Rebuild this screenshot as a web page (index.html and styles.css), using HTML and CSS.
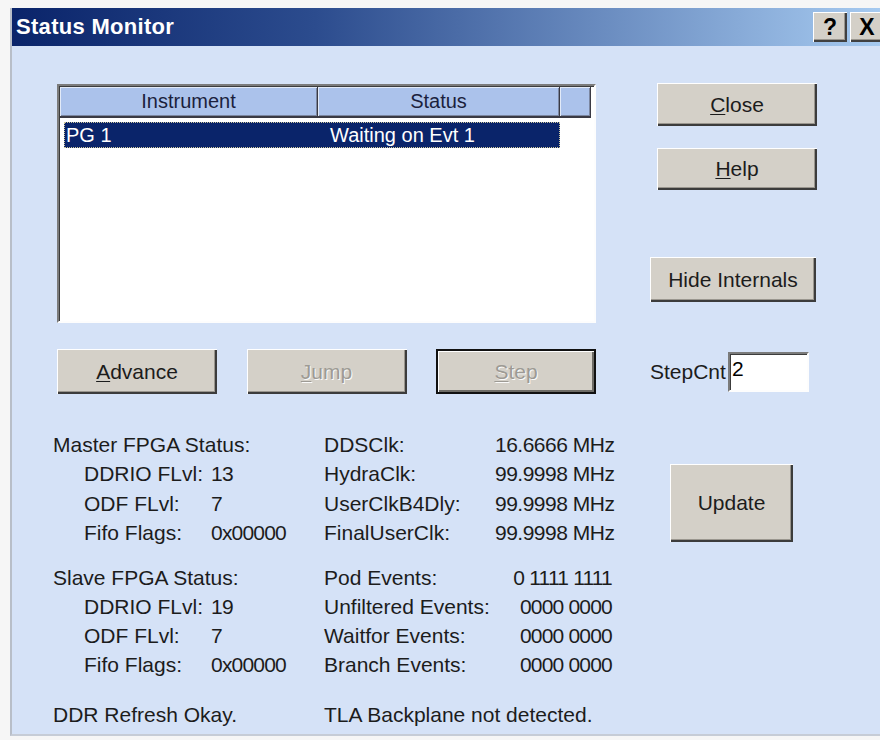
FILE: index.html
```html
<!DOCTYPE html>
<html lang="en">
<head>
<meta charset="utf-8">
<title>Status Monitor</title>
<link rel="stylesheet" href="styles.css">
</head>
<body>
<div class="window">
  <div class="titlebar">
    <span class="title">Status Monitor</span>
    <div class="caption-btns">
      <button class="cap-btn">?</button>
      <button class="cap-btn">X</button>
    </div>
  </div>

  <div class="client">
    <div class="top">
      <div class="listbox">
        <div class="lv-head">
          <div class="hcell h1">Instrument</div>
          <div class="hcell h2">Status</div>
          <div class="hcell h3"></div>
        </div>
        <div class="lv-row selected">
          <span class="r1">PG 1</span><span class="r2">Waiting on Evt 1</span>
        </div>
      </div>

      <div class="side">
        <button class="btn btn-close"><u>C</u>lose</button>
        <button class="btn btn-help"><u>H</u>elp</button>
        <button class="btn btn-hide">Hide Internals</button>
      </div>

      <div class="actions">
        <button class="btn act"><u>A</u>dvance</button>
        <button class="btn act" disabled><u>J</u>ump</button>
        <button class="btn act default" disabled><u>S</u>tep</button>
      </div>

      <div class="stepcnt">
        <label for="stepcnt">StepCnt</label>
        <input id="stepcnt" class="edit" value="2">
      </div>
    </div>

    <div class="info">
      <div class="group">Master FPGA Status:</div>
      <div class="mlabel">DDSClk:</div>
      <div class="mval">16.6666 MHz</div>

      <div class="sub">DDRIO FLvl:</div>
      <div class="val">13</div>
      <div class="mlabel">HydraClk:</div>
      <div class="mval">99.9998 MHz</div>

      <div class="sub">ODF FLvl:</div>
      <div class="val">7</div>
      <div class="mlabel">UserClkB4Dly:</div>
      <div class="mval">99.9998 MHz</div>

      <div class="sub">Fifo Flags:</div>
      <div class="val">0x00000</div>
      <div class="mlabel">FinalUserClk:</div>
      <div class="mval">99.9998 MHz</div>

      <button class="btn btn-update">Update</button>

      <div class="spacer"></div>

      <div class="group">Slave FPGA Status:</div>
      <div class="mlabel">Pod Events:</div>
      <div class="mval bits">0 1111 1111</div>

      <div class="sub">DDRIO FLvl:</div>
      <div class="val">19</div>
      <div class="mlabel">Unfiltered Events:</div>
      <div class="mval bits">0000 0000</div>

      <div class="sub">ODF FLvl:</div>
      <div class="val">7</div>
      <div class="mlabel">Waitfor Events:</div>
      <div class="mval bits">0000 0000</div>

      <div class="sub">Fifo Flags:</div>
      <div class="val">0x00000</div>
      <div class="mlabel">Branch Events:</div>
      <div class="mval bits">0000 0000</div>

      <div class="spacer"></div>

      <div class="group">DDR Refresh Okay.</div>
      <div class="footer-r">TLA Backplane not detected.</div>
    </div>
  </div>
</div>
</body>
</html>
```

FILE: styles.css
```css
* {
  box-sizing: border-box;
}

html,
body {
  margin: 0;
  padding: 0;
}

body {
  width: 880px;
  height: 740px;
  overflow: hidden;
  background: #f6f6f6;
  font-family: "Liberation Sans", Arial, sans-serif;
  font-size: 21px;
  color: #1c1c1c;
}

/* dialog frame */
.window {
  margin: 8px 0 0 10px;
  height: 728px;
  border-left: 2px solid #b8bec8;
  border-bottom: 2px solid #c6ccd6;
  background: #d5e2f7;
  display: flex;
  flex-direction: column;
}

.titlebar {
  height: 38px;
  flex: none;
  display: flex;
  align-items: center;
  justify-content: space-between;
  padding-left: 4px;
  background: linear-gradient(to right, #0a246a 0%, #2c4c8e 35%, #a6caf0 100%);
}

.title {
  color: #fff;
  font-weight: bold;
  font-size: 22px;
  letter-spacing: 0.3px;
}

.caption-btns {
  display: flex;
  gap: 3px;
  margin-right: -4px;
}

.cap-btn {
  width: 34px;
  height: 30px;
  padding: 0;
  border: 0;
  background: #d4d0c8;
  font-family: "Liberation Sans", Arial, sans-serif;
  font-weight: bold;
  font-size: 23px;
  line-height: 30px;
  color: #000;
  box-shadow: inset 1px 1px #ffffff, inset -2px -2px #404040, inset -3px -3px #9a968e;
}

/* push buttons */
.btn {
  font-family: inherit;
  font-size: 21px;
  color: #1c1c1c;
  background: #d4d0c8;
  border: 0;
  padding: 0;
  box-shadow: inset 1px 1px #ffffff, inset -2px -2px #3c3c3c, inset -3px -3px #9a968e;
}

.btn u {
  text-decoration-thickness: 1px;
  text-underline-offset: 2px;
}

.btn:disabled {
  color: #9d9a94;
  text-shadow: 1px 1px #fafafa;
}

.btn.default {
  box-shadow: inset 0 0 0 2px #111111, inset 3px 3px #ffffff, inset -4px -4px #6e6c66;
}

.client {
  flex: 1;
  padding-top: 38px;
}

/* upper area: list + command buttons */
.top {
  display: grid;
  grid-template-columns: 539px 170px;
  grid-template-rows: 239px 45px;
  column-gap: 54px;
  row-gap: 26px;
  margin-left: 45px;
}

.listbox {
  background: #fff;
  border: 2px solid;
  border-color: #7b7b7b #fdfdfd #fdfdfd #7b7b7b;
  padding: 1px 3px 0 1px;
  box-shadow: inset 1px 1px #3c3c3c;
  display: flex;
  flex-direction: column;
}

.lv-head {
  display: flex;
  height: 31px;
  flex: none;
}

.hcell {
  height: 31px;
  background: #abc2eb;
  color: #1b1f3d;
  font-size: 20px;
  line-height: 29px;
  text-align: center;
  border-right: 1px solid #3a3a44;
  border-bottom: 2px solid #3a3a44;
  box-shadow: inset 1px 1px #e2eaf8, inset -1px -1px #7b86a0;
}

.h1 {
  width: 258px;
}

.h2 {
  width: 242px;
}

.h3 {
  width: 31px;
}

.lv-row {
  display: flex;
  margin: 4px 0 0 4px;
  width: 496px;
  height: 26px;
  font-size: 20px;
  line-height: 26px;
  white-space: nowrap;
}

.lv-row.selected {
  background: #0a246a;
  color: #fff;
  outline: 1px dotted #cfc89c;
  outline-offset: -1px;
}

.r1 {
  width: 266px;
  padding-left: 2px;
}

.side {
  display: flex;
  flex-direction: column;
  align-items: flex-start;
}

.btn-close {
  width: 160px;
  height: 43px;
  margin-left: 7px;
  margin-top: -1px;
}

.btn-help {
  width: 160px;
  height: 42px;
  margin-left: 7px;
  margin-top: 22px;
}

.btn-hide {
  width: 166px;
  height: 45px;
  margin-top: 67px;
}

.actions {
  display: flex;
  justify-content: space-between;
}

.act {
  width: 160px;
  height: 45px;
}

.stepcnt {
  display: flex;
  align-items: center;
  gap: 2px;
}

.edit {
  width: 81px;
  height: 40px;
  font-family: inherit;
  font-size: 21px;
  color: #000;
  background: #fff;
  padding: 0 0 6px 2px;
  border: 2px solid;
  border-color: #7b7b7b #fdfdfd #fdfdfd #7b7b7b;
  box-shadow: inset 1px 1px #3c3c3c;
  outline: none;
}

/* status readouts */
.info {
  display: grid;
  grid-template-columns: 31px 127px 113px 171px 117px 58px 123px;
  grid-template-rows: repeat(4, 29.3px) 16px repeat(4, 29px) 21px 29px;
  margin: 36px 0 0 41px;
  line-height: 29px;
  white-space: nowrap;
}

.group {
  grid-column: 1 / 4;
}

.sub {
  grid-column: 2;
}

.val {
  grid-column: 3;
  letter-spacing: -0.8px;
}

.mlabel {
  grid-column: 4;
}

.mval {
  grid-column: 5;
  letter-spacing: -0.5px;
}

.mval.bits {
  text-align: right;
  letter-spacing: -0.8px;
}

.spacer {
  grid-column: 1 / -1;
}

.footer-r {
  grid-column: 4 / 7;
}

.btn-update {
  grid-column: 7;
  grid-row: 2 / 5;
  align-self: center;
  width: 123px;
  height: 78px;
}
```
